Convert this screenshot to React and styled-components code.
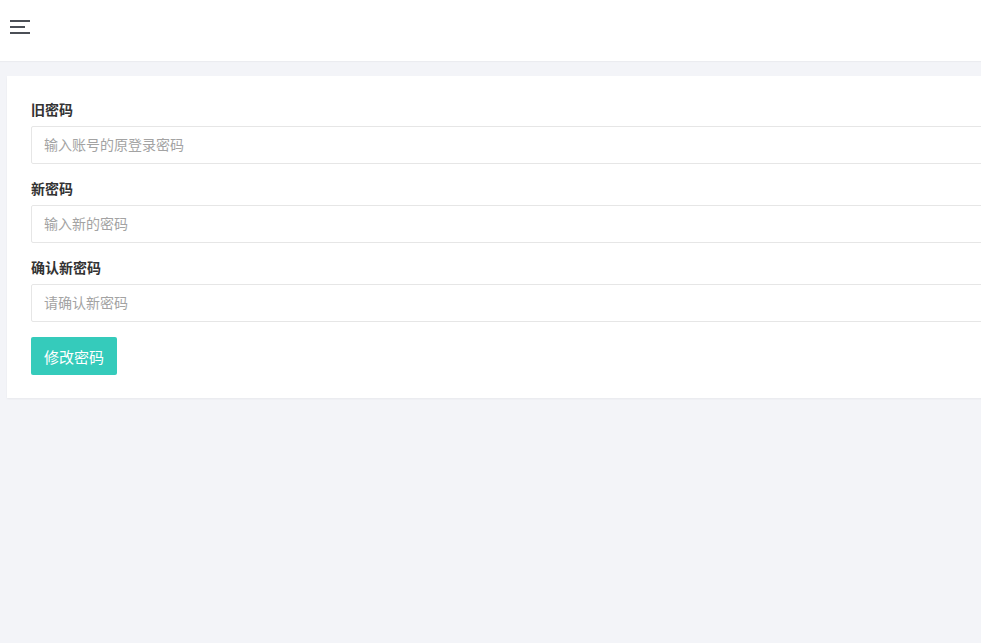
import React from "react";
import styled, { createGlobalStyle } from "styled-components";

const GlobalStyle = createGlobalStyle`
  html, body {
    margin: 0;
    padding: 0;
    background: #f3f4f8;
    overflow: hidden;
    font-family: "Helvetica Neue", "Liberation Sans", "Noto Sans CJK SC", sans-serif;
  }
  * { box-sizing: border-box; }
`;

const Page = styled.div`
  min-height: 643px;
  width: 1040px;
`;

const Header = styled.div`
  height: 61px;
  background: #fff;
  display: flex;
  align-items: center;
  padding-left: 10px;
  box-shadow: 0 1px 1px rgba(0, 0, 0, 0.03);
`;

const MenuButton = styled.button`
  border: 0;
  background: none;
  padding: 0;
  width: 20px;
  height: 14px;
  display: flex;
  flex-direction: column;
  justify-content: space-between;
  cursor: pointer;
  margin-top: -7px;
`;

const Bar = styled.span`
  display: block;
  height: 2px;
  width: ${(p) => p.w}px;
  background: #4b4f56;
`;

const Main = styled.div`
  padding: 15px 0 0 7px;
`;

const Card = styled.div`
  background: #fff;
  padding: 25px 24px 23px;
  box-shadow: 0 1px 2px rgba(0, 0, 0, 0.05);
`;

const Group = styled.div`
  margin-bottom: 16px;
`;

const Label = styled.label`
  display: block;
  font-size: 14px;
  font-weight: bold;
  line-height: 18px;
  color: #333;
  margin-bottom: 7px;
`;

const Input = styled.input`
  display: block;
  width: 100%;
  height: 38px;
  border: 1px solid #e6e6e6;
  border-radius: 2px;
  padding: 0 12px;
  font-size: 14px;
  font-family: inherit;
  color: #333;
  outline: none;
  &::placeholder {
    color: #a3a3a3;
  }
`;

const SubmitButton = styled.button`
  margin-top: -1px;
  height: 38px;
  padding: 0 13px;
  border: 0;
  border-radius: 2px;
  background: #35cbbb;
  color: #fff;
  font-size: 15px;
  font-family: inherit;
  cursor: pointer;
`;

const fields = [
  { label: "旧密码", placeholder: "输入账号的原登录密码" },
  { label: "新密码", placeholder: "输入新的密码" },
  { label: "确认新密码", placeholder: "请确认新密码" },
];

export default function App() {
  return (
    <>
      <GlobalStyle />
      <Page>
        <Header>
          <MenuButton>
            <Bar w={20} />
            <Bar w={15} />
            <Bar w={20} />
          </MenuButton>
        </Header>
        <Main>
          <Card>
            {fields.map((f) => (
              <Group key={f.label}>
                <Label>{f.label}</Label>
                <Input type="password" placeholder={f.placeholder} />
              </Group>
            ))}
            <SubmitButton>修改密码</SubmitButton>
          </Card>
        </Main>
      </Page>
    </>
  );
}
